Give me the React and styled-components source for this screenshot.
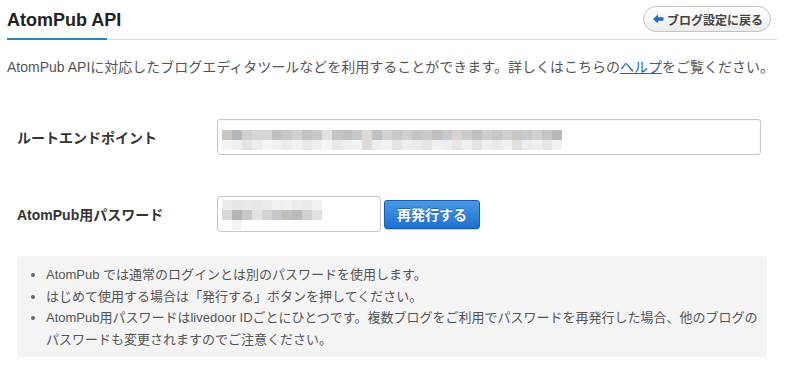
import React from "react";
import styled, { createGlobalStyle } from "styled-components";

const GlobalStyle = createGlobalStyle`
  html, body {
    margin: 0;
    padding: 0;
    background: #ffffff;
  }
  body {
    font-family: "Liberation Sans", Arial, "Noto Sans CJK JP", sans-serif;
    color: #555555;
  }
`;

const Page = styled.div`
  width: 770px;
  padding: 0 7px;
`;

const Header = styled.div`
  position: relative;
  display: flex;
  justify-content: space-between;
  align-items: flex-start;
  height: 39px;
  border-bottom: 1px solid #dcdcdc;

  &::after {
    content: "";
    position: absolute;
    left: 0;
    bottom: -1px;
    width: 100px;
    height: 2px;
    background: #2a85b8;
  }
`;

const Title = styled.h1`
  margin: 9px 0 0;
  font-size: 18px;
  line-height: 22px;
  font-weight: bold;
  color: #222222;
`;

const BackButton = styled.a`
  display: flex;
  align-items: center;
  gap: 3px;
  margin: 6px 6px 0 0;
  height: 24px;
  padding: 0 7px 0 9px;
  border: 1px solid #c4c4c4;
  border-radius: 13px;
  background: linear-gradient(#ffffff, #ececec);
  font-size: 12px;
  font-weight: bold;
  color: #444444;
  text-decoration: none;
  cursor: pointer;
`;

const Description = styled.p`
  margin: 17px 0 0;
  font-size: 14px;
  line-height: 20px;
  color: #555555;
  white-space: nowrap;
`;

const HelpLink = styled.a`
  color: #1b63b8;
  text-decoration: underline;
`;

const Form = styled.div`
  display: flex;
  flex-direction: column;
  gap: 41px;
  margin-top: 42px;
`;

const Row = styled.div`
  display: flex;
  align-items: center;
`;

const Label = styled.div`
  width: 210px;
  padding-left: 10px;
  box-sizing: border-box;
  font-size: 14px;
  font-weight: bold;
  color: #333333;
`;

const Field = styled.div`
  box-sizing: border-box;
  width: ${(p) => p.$width}px;
  height: 36px;
  padding: ${(p) => p.$top}px 4px 0;
  border: 1px solid #c8c8c8;
  border-radius: 3px;
  background: #ffffff;
  box-shadow: inset 0 1px 2px rgba(0, 0, 0, 0.05);
`;

const Mosaic = styled.div`
  display: flex;
  flex-direction: column;
`;

const MosaicRow = styled.div`
  display: flex;
  height: 10px;
`;

const Cell = styled.span`
  width: 10px;
  height: 10px;
  flex: none;
`;

const ReissueButton = styled.button`
  margin-left: 3px;
  height: 29px;
  width: 96px;
  border: 1px solid #1d5cb0;
  border-radius: 3px;
  background: linear-gradient(#4a9ae6, #1f6fd1);
  box-shadow: 0 1px 1px rgba(0, 0, 0, 0.2);
  color: #ffffff;
  font-family: "Liberation Sans", Arial, "Noto Sans CJK JP", sans-serif;
  font-size: 14px;
  font-weight: bold;
  text-shadow: 0 -1px 0 rgba(0, 0, 0, 0.3);
  cursor: pointer;
`;

const InfoBox = styled.div`
  margin: 24px 10px 0;
  padding: 8px 2px 6px 0;
  border-radius: 4px;
  background: #f4f4f4;
`;

const InfoList = styled.ul`
  margin: 0;
  padding-left: 29px;
  font-size: 13px;
  line-height: 21.7px;
  color: #555555;

  li::marker {
    color: #666666;
  }
`;

const endpointRows = [
  [
    "#cbc7c6", "#b5b7bb", "#d0d0d0", "#d6d6d6", "#d6d6d6", "#c3c0c0", "#c6c6c8", "#d1d1d1",
    "#c3c1c1", "#cbc8c8", "#dfe0e3", "#c4c4c4", "#c3bfbe", "#c5c7cb", "#ded9d6", "#c0bfc1",
    "#d2d3d6", "#c8c8c8", "#cfcfcf", "#c6c3c3", "#cacaca", "#c0bebf", "#c7c9cc", "#d5d2d0",
    "#cbcbcb", "#c0c0c2", "#cfcccb", "#c7c7c7", "#d0d0d2", "#c9c6c5", "#c8cacd", "#d1d1d1",
    "#c6c6c6", "#b9b9bb",
  ],
  [
    "#f4f4f4", "#eeeff1", "#e4e4e4", "#ededed", "#f6f6f6", "#f2f2f2", "#ebebeb", "#f0f0f0",
    "#e9e9e9", "#eeeeee", "#f5f6f6", "#e8e8e8", "#eeeeee", "#f2f2f2", "#dcdcdc", "#eeeeee",
    "#f3f3f3", "#e4e4e4", "#ededed", "#ebebeb", "#e6e6e6", "#f0f0f0", "#ebeef0", "#e9e6e4",
    "#eeeeee", "#e4e4e4", "#efefef", "#eaeaea", "#f0f0f0", "#e0e0e0", "#ebebeb", "#efefef",
    "#e6e6e6", "#f1f1f1",
  ],
];

const passwordRows = [
  ["#ececec", "#e6e6e6", "#e9e9e9", "#e8e8e8", "#ebebeb", "#eef0f2", "#f4f2ef", "#ebecee", "#eaeaea", "#f1f1f1"],
  ["#d8d8d8", "#b4b4b6", "#c8c8c8", "#e2e2e0", "#d3d4d6", "#c7c7c9", "#c1bfbc", "#b9babe", "#d3d1cf", "#e0e1e3"],
  ["transparent", "#f4f4f6"],
];

const MosaicText = ({ rows }) => (
  <Mosaic>
    {rows.map((row, i) => (
      <MosaicRow key={i}>
        {row.map((c, j) => (
          <Cell key={j} style={{ background: c }} />
        ))}
      </MosaicRow>
    ))}
  </Mosaic>
);

const ArrowIcon = () => (
  <svg width="11" height="10" viewBox="0 0 11 10">
    <path d="M0 5 L5 0.5 V3.2 H10.5 V6.8 H5 V9.5 Z" fill="#1f6fc5" />
  </svg>
);

const App = () => {
  return (
    <Page>
      <GlobalStyle />
      <Header>
        <Title>AtomPub API</Title>
        <BackButton>
          <ArrowIcon />
          ブログ設定に戻る
        </BackButton>
      </Header>
      <Description>
        AtomPub APIに対応したブログエディタツールなどを利用することができます。詳しくはこちらの
        <HelpLink>ヘルプ</HelpLink>をご覧ください。
      </Description>
      <Form>
        <Row>
          <Label>ルートエンドポイント</Label>
          <Field $width={544} $top={10}>
            <MosaicText rows={endpointRows} />
          </Field>
        </Row>
        <Row>
          <Label>AtomPub用パスワード</Label>
          <Field $width={164} $top={3}>
            <MosaicText rows={passwordRows} />
          </Field>
          <ReissueButton>再発行する</ReissueButton>
        </Row>
      </Form>
      <InfoBox>
        <InfoList>
          <li>AtomPub では通常のログインとは別のパスワードを使用します。</li>
          <li>はじめて使用する場合は「発行する」ボタンを押してください。</li>
          <li>
            AtomPub用パスワードはlivedoor IDごとにひとつです。複数ブログをご利用でパスワードを再発行した場合、他のブログのパスワードも変更されますのでご注意ください。
          </li>
        </InfoList>
      </InfoBox>
    </Page>
  );
};

export default App;
